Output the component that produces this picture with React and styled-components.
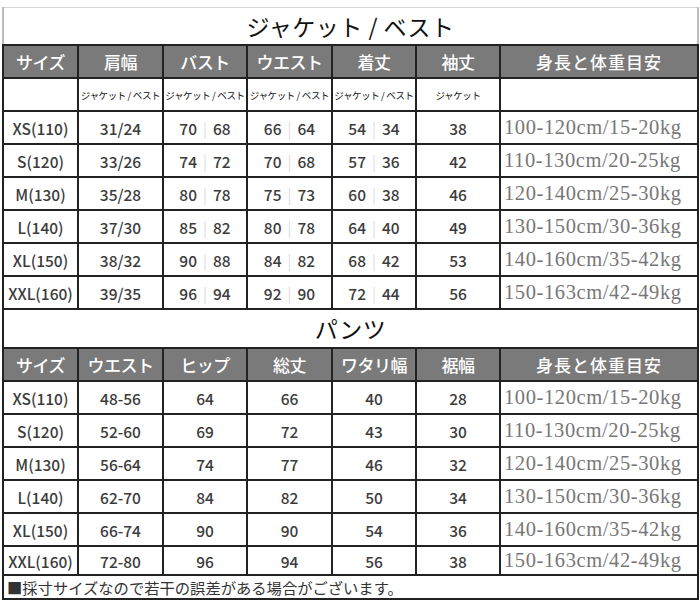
import React from "react";
import styled, { createGlobalStyle } from "styled-components";

const GlobalStyle = createGlobalStyle`
  html, body {
    margin: 0;
    padding: 0;
    background: #fff;
  }
  body {
    font-family: "Noto Sans CJK JP", "Noto Sans", sans-serif;
    color: #333;
  }
`;

const jacketRows = [
  ["XS(110)", "31/24", [70, 68], [66, 64], [54, 34], "38", "100-120cm/15-20kg"],
  ["S(120)", "33/26", [74, 72], [70, 68], [57, 36], "42", "110-130cm/20-25kg"],
  ["M(130)", "35/28", [80, 78], [75, 73], [60, 38], "46", "120-140cm/25-30kg"],
  ["L(140)", "37/30", [85, 82], [80, 78], [64, 40], "49", "130-150cm/30-36kg"],
  ["XL(150)", "38/32", [90, 88], [84, 82], [68, 42], "53", "140-160cm/35-42kg"],
  ["XXL(160)", "39/35", [96, 94], [92, 90], [72, 44], "56", "150-163cm/42-49kg"],
];

const pantsRows = [
  ["XS(110)", "48-56", "64", "66", "40", "28", "100-120cm/15-20kg"],
  ["S(120)", "52-60", "69", "72", "43", "30", "110-130cm/20-25kg"],
  ["M(130)", "56-64", "74", "77", "46", "32", "120-140cm/25-30kg"],
  ["L(140)", "62-70", "84", "82", "50", "34", "130-150cm/30-36kg"],
  ["XL(150)", "66-74", "90", "90", "54", "36", "140-160cm/35-42kg"],
  ["XXL(160)", "72-80", "96", "94", "56", "38", "150-163cm/42-49kg"],
];

const jacketHead = ["サイズ", "肩幅", "バスト", "ウエスト", "着丈", "袖丈", "身長と体重目安"];
const pantsHead = ["サイズ", "ウエスト", "ヒップ", "総丈", "ワタリ幅", "裾幅", "身長と体重目安"];
const subHead = ["", "ジャケット / ベスト", "ジャケット / ベスト", "ジャケット / ベスト", "ジャケット / ベスト", "ジャケット", ""];

const Page = styled.div`
  padding: 7px 0 0 2px;
  width: 698px;
`;

const Sheet = styled.table`
  width: 695px;
  border-collapse: collapse;
  table-layout: fixed;
`;

const TitleCell = styled.td`
  height: ${(p) => p.$h}px;
  padding: 0;
  line-height: 1;
  vertical-align: middle;
  text-align: center;
  font-size: 23px;
  color: #111;
  letter-spacing: 0.5px;
  border: 2px solid #222;
  border-top-color: ${(p) => (p.$first ? "#d4d4d4" : "#222")};
  border-top-width: ${(p) => (p.$first ? "1px" : "2px")};
  border-left-color: ${(p) => (p.$first ? "#bdbdbd" : "#222")};
  border-right-color: ${(p) => (p.$first ? "#bdbdbd" : "#222")};
`;

const HeadCell = styled.td`
  height: 31px;
  padding: 0;
  background: #7a7a7a;
  color: #fff;
  font-size: 17px;
  font-weight: 500;
  text-align: center;
  white-space: nowrap;
  border: 2px solid #222;
  letter-spacing: ${(p) => (p.$wide ? "1px" : "-0.5px")};
`;

const SubCell = styled.td`
  height: 31px;
  padding: 0;
  font-size: 9.5px;
  letter-spacing: -0.4px;
  color: #111;
  text-align: center;
  white-space: nowrap;
  overflow: hidden;
  border: 2px solid #222;
`;

const Cell = styled.td`
  height: ${(p) => p.$h || 31}px;
  padding: 0;
  font-size: 15.5px;
  font-weight: 500;
  color: #3c3c3c;
  text-align: center;
  white-space: nowrap;
  border: 2px solid #222;
`;

const RangeCell = styled.td`
  height: ${(p) => p.$h || 31}px;
  padding: 0 0 0 3px;
  font-family: "Liberation Serif", "DejaVu Serif", serif;
  font-size: 20.5px;
  letter-spacing: 0.6px;
  color: #777;
  text-align: left;
  white-space: nowrap;
  border: 2px solid #222;
`;

const Sep = styled.span`
  color: #cfcfcf;
  margin: 0 6px;
  font-weight: 300;
`;

const NoteCell = styled.td`
  height: 22px;
  padding: 0 0 0 3px;
  font-size: 15.3px;
  color: #333;
  white-space: nowrap;
  border: 2px solid #222;
  line-height: 22px;
`;

const Pair = ({ v }) => (
  <>
    {v[0]}
    <Sep>|</Sep>
    {v[1]}
  </>
);

const Cols = () => (
  <colgroup>
    <col style={{ width: 75 }} />
    <col style={{ width: 85 }} />
    <col style={{ width: 84 }} />
    <col style={{ width: 85 }} />
    <col style={{ width: 84 }} />
    <col style={{ width: 84 }} />
    <col style={{ width: 198 }} />
  </colgroup>
);

const App = () => (
  <Page>
    <GlobalStyle />
    <Sheet>
      <Cols />
      <tbody>
        <tr>
          <TitleCell colSpan={7} $h={36} $first>
            ジャケット / ベスト
          </TitleCell>
        </tr>
        <tr>
          {jacketHead.map((h, i) => (
            <HeadCell key={i} $wide={i === 6}>
              {h}
            </HeadCell>
          ))}
        </tr>
        <tr>
          {subHead.map((s, i) => (
            <SubCell key={i}>{s}</SubCell>
          ))}
        </tr>
        {jacketRows.map((r) => (
          <tr key={r[0]}>
            <Cell>{r[0]}</Cell>
            <Cell>{r[1]}</Cell>
            <Cell>
              <Pair v={r[2]} />
            </Cell>
            <Cell>
              <Pair v={r[3]} />
            </Cell>
            <Cell>
              <Pair v={r[4]} />
            </Cell>
            <Cell>{r[5]}</Cell>
            <RangeCell>{r[6]}</RangeCell>
          </tr>
        ))}
        <tr>
          <TitleCell colSpan={7} $h={37}>
            パンツ
          </TitleCell>
        </tr>
        <tr>
          {pantsHead.map((h, i) => (
            <HeadCell key={i} $wide={i === 6}>
              {h}
            </HeadCell>
          ))}
        </tr>
        {pantsRows.map((r, idx) => (
          <tr key={r[0]}>
            {r.slice(0, 6).map((c, i) => (
              <Cell key={i} $h={idx === 5 ? 27 : 31}>
                {c}
              </Cell>
            ))}
            <RangeCell $h={idx === 5 ? 27 : 31}>{r[6]}</RangeCell>
          </tr>
        ))}
        <tr>
          <NoteCell colSpan={7}>■採寸サイズなので若干の誤差がある場合がございます。</NoteCell>
        </tr>
      </tbody>
    </Sheet>
  </Page>
);

export default App;
